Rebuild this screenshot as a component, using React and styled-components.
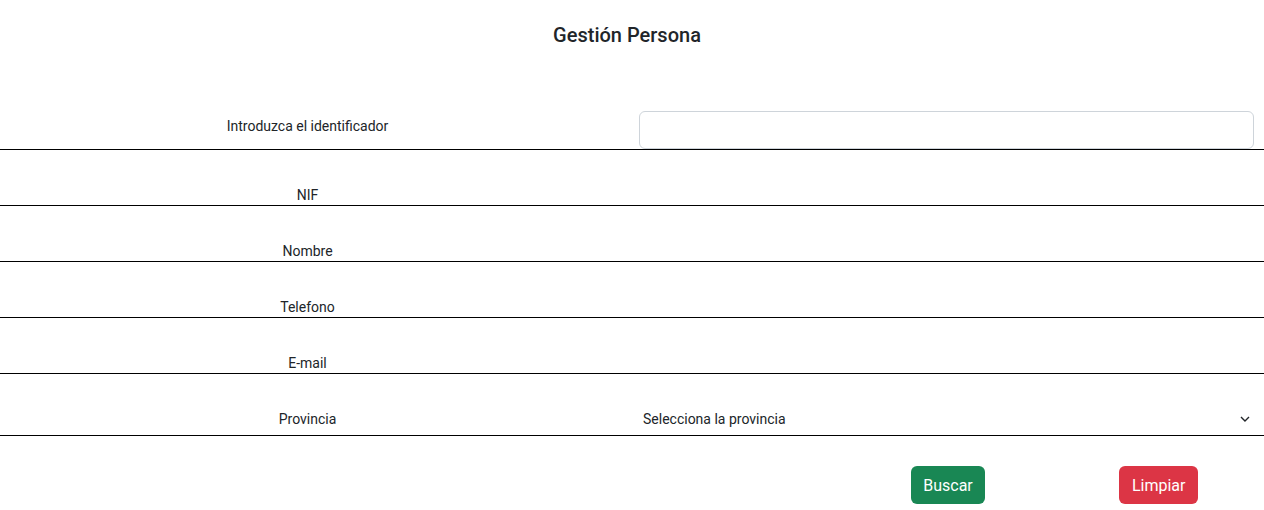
import styled, { createGlobalStyle } from "styled-components";

const GlobalStyle = createGlobalStyle`
  body {
    margin: 0;
    font-family: Roboto, "Liberation Sans", sans-serif;
    color: #212529;
    background: #fff;
  }
  * {
    box-sizing: border-box;
  }
`;

const Title = styled.h1`
  margin: 0;
  padding: 23px 10px 0 0;
  font-size: 20px;
  line-height: 24px;
  font-weight: 500;
  text-align: center;
`;

const Form = styled.form`
  margin-top: 53px;
`;

const FieldRow = styled.div`
  display: grid;
  grid-template-columns: 615px 1fr;
  column-gap: 24px;
  padding-right: 10px;
  height: ${(p) => p.$height}px;
  align-items: end;
  border-bottom: 1px solid #000;
`;

const Label = styled.label`
  display: block;
  text-align: center;
  font-size: 14px;
  line-height: 20px;
  padding-bottom: ${(p) => p.$pad || 0}px;
`;

const TextInput = styled.input`
  display: block;
  width: 100%;
  height: 38px;
  border: 1px solid #ced4da;
  border-radius: 6px;
  padding: 6px 12px;
  font: inherit;
  font-size: 16px;
  outline: none;
`;

const Select = styled.select`
  display: block;
  width: 100%;
  height: 20px;
  margin-bottom: 6px;
  padding: 0 20px 0 4px;
  border: none;
  outline: none;
  background: #fff
    url("data:image/svg+xml,%3Csvg xmlns='http://www.w3.org/2000/svg' width='10' height='6' viewBox='0 0 10 6'%3E%3Cpath d='M1 1l4 4 4-4' fill='none' stroke='%23212529' stroke-width='1.4'/%3E%3C/svg%3E")
    no-repeat right 4px center;
  appearance: none;
  font-family: inherit;
  font-size: 14px;
  color: #212529;
`;

const Actions = styled.div`
  display: grid;
  grid-template-columns: repeat(6, 1fr);
  justify-items: center;
  margin-top: 30px;
`;

const Button = styled.button`
  grid-column: ${(p) => p.$col};
  height: 38px;
  padding: 0 12.5px;
  border: none;
  border-radius: 6px;
  background: ${(p) => p.$bg};
  color: #fff;
  font-family: inherit;
  font-size: 16px;
  cursor: pointer;
`;

const fields = [
  { label: "NIF" },
  { label: "Nombre" },
  { label: "Telefono" },
  { label: "E-mail" },
];

export default function App() {
  return (
    <>
      <GlobalStyle />
      <Title>Gestión Persona</Title>
      <Form onSubmit={(e) => e.preventDefault()}>
        <FieldRow $height={50}>
          <Label $pad={13}>Introduzca el identificador</Label>
          <TextInput type="text" />
        </FieldRow>
        {fields.map((f) => (
          <FieldRow key={f.label} $height={56}>
            <Label>{f.label}</Label>
            <div />
          </FieldRow>
        ))}
        <FieldRow $height={62}>
          <Label $pad={6}>Provincia</Label>
          <Select defaultValue="">
            <option value="">Selecciona la provincia</option>
          </Select>
        </FieldRow>
        <Actions>
          <Button type="submit" $col={5} $bg="#198754">
            Buscar
          </Button>
          <Button type="button" $col={6} $bg="#dc3545">
            Limpiar
          </Button>
        </Actions>
      </Form>
    </>
  );
}
